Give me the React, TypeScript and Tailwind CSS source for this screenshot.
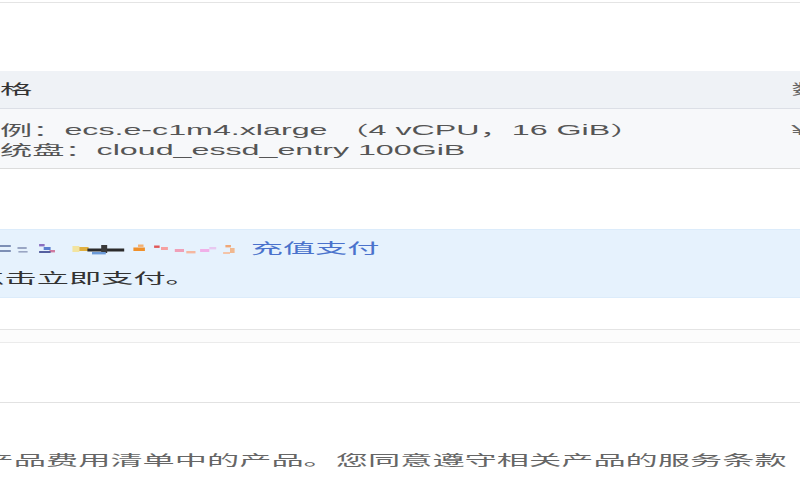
import React from 'react';

// Bill summary fragment: spec table, recharge notice, terms line.
// The screenshot is stretched horizontally, so the page is drawn at
// its natural width and widened with scale-x.

const Mosaic: React.FC = () => (
  <svg width="121" height="16" viewBox="0 0 121 16" className="inline-block align-middle">
    <rect x="11.7" y="5" width="5" height="2" fill="#7d8fb5" />
    <rect x="11.7" y="10" width="5" height="2" fill="#7d8fb5" />
    <rect x="19.6" y="7" width="4" height="2" fill="#9aa6c4" />
    <rect x="20" y="11" width="4" height="1.6" fill="#9aa6c4" />
    <rect x="29" y="4" width="2.4" height="2.4" fill="#8a6fc0" />
    <rect x="31" y="7" width="3" height="3" fill="#5a7fd0" />
    <rect x="33.5" y="10" width="2.4" height="2.4" fill="#d07aa0" />
    <rect x="29" y="11" width="5" height="2" fill="#5560a0" />
    <rect x="43.5" y="6" width="3" height="6" fill="#f2e4a0" />
    <rect x="46.5" y="7" width="4" height="4" fill="#e0b040" />
    <rect x="50" y="8.5" width="16" height="3" fill="#2b2b2b" />
    <rect x="56" y="5" width="2.6" height="8" fill="#3a3a3a" />
    <rect x="52" y="12" width="6" height="2.4" fill="#6a9ad8" />
    <rect x="70" y="7.5" width="5" height="3.5" fill="#f0902a" />
    <rect x="72" y="4.5" width="2.4" height="2.4" fill="#f4b070" />
    <rect x="79" y="5.5" width="2.4" height="2.4" fill="#e05858" />
    <rect x="82" y="7" width="3" height="3" fill="#f6a0a0" />
    <rect x="88" y="9" width="4" height="3" fill="#f0a0b8" />
    <rect x="93" y="11" width="4" height="2.4" fill="#f5b8a0" />
    <rect x="99" y="9" width="4" height="3" fill="#f0b0e8" />
    <rect x="103" y="7" width="3" height="2.4" fill="#e8c8f0" />
    <rect x="110" y="5" width="2.4" height="2.4" fill="#f0a878" />
    <rect x="112" y="8" width="2" height="5" fill="#f0b890" />
    <rect x="109" y="12" width="3" height="2" fill="#f4c4a8" />
  </svg>
);

export default function App() {
  return (
    <div className="w-[800px] h-[500px] overflow-hidden bg-white font-['Liberation_Sans','Noto_Sans_CJK_SC',sans-serif]">
      <div className="w-[348px] origin-left scale-x-[2.3]">
        <div className="h-[2px]" />
        <div className="h-[69px] border-t border-[#e4e4e4]" />

        {/* spec table */}
        <div className="flex h-[38px] items-center border-b border-[#dcdfe6] bg-[#eff2f6] text-[14px] text-[#333]">
          <div className="-ml-[14px] w-[358px] shrink-0 whitespace-nowrap">规格</div>
          <div className="whitespace-nowrap text-[#666]">数量</div>
        </div>
        <div className="flex border-b border-[#dcdcdc] bg-[#f7f8fa] pt-[11px] pb-[8px] text-[14px] leading-[20px] text-[#555]">
          <div className="-ml-[14px] w-[358px] shrink-0 whitespace-nowrap">
            <div>实例：ecs.e-c1m4.xlarge （4 vCPU，16 GiB）</div>
            <div>系统盘：cloud_essd_entry 100GiB</div>
          </div>
          <div className="whitespace-nowrap text-[#666]">¥</div>
        </div>

        <div className="h-[60px]" />

        {/* recharge notice */}
        <div className="h-[69px] border-y border-[#dcecfb] bg-[#e6f2fd] py-[3px] text-[14px] leading-[30px]">
          <div className="-ml-[12px] whitespace-nowrap">
            <div className="flex items-center">
              <Mosaic />
              <span className="text-[#4a72cc]">充值支付</span>
            </div>
            <div className="text-[#333]">点击立即支付。</div>
          </div>
        </div>

        <div className="h-[31px]" />
        <div className="h-[13px] border-t border-[#e4e4e4] bg-[#fcfcfc]" />
        <div className="h-[60px] border-t border-[#ebebeb]" />

        {/* terms */}
        <div className="border-t border-[#e2e2e2] pt-[47px] text-[14px] leading-[20px] text-[#666]">
          <div className="-ml-[8px] whitespace-nowrap">产品费用清单中的产品。您同意遵守相关产品的服务条款</div>
        </div>
      </div>
    </div>
  );
}
